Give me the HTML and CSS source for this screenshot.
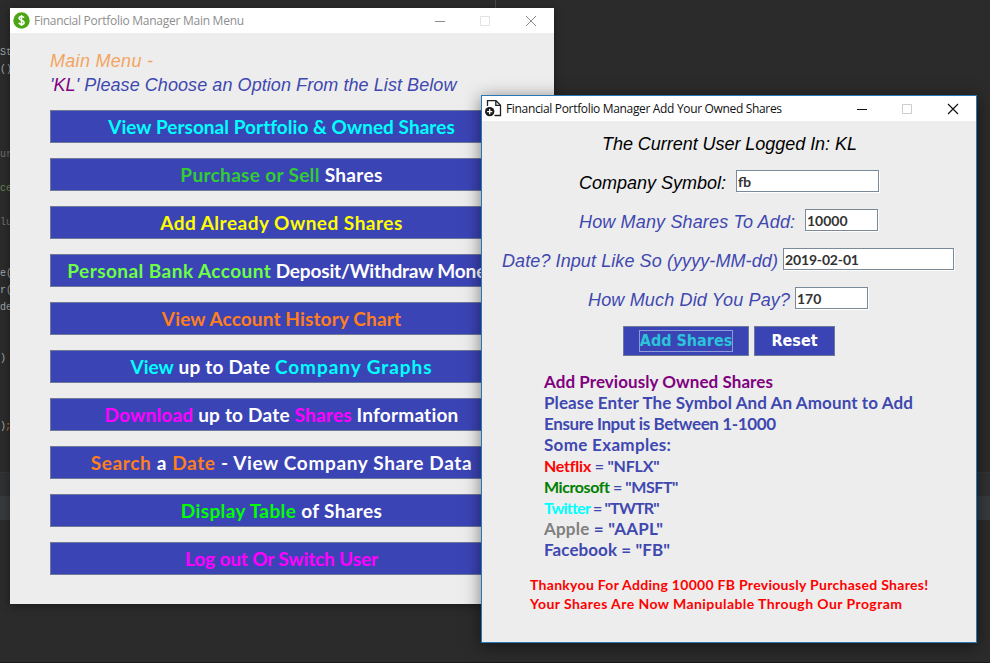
FILE: index.html
```html
<!DOCTYPE html>
<html lang="en">
<head>
<meta charset="utf-8">
<title>Financial Portfolio Manager</title>
<link rel="stylesheet" href="styles.css">
</head>
<body>
<div class="desktop">
<div class="editor">
<pre class="code">St
()




<span class="dim">ur</span>

<span class="string">ce</span>

<span class="dim">lu</span>


e(
r(
de


<span class="cut">)</span>



<span class="cut">)<span class="semi">;</span></span></pre>
<div class="band"></div>
<div class="band band-current"></div>
</div>
<div class="guide"></div>

<section class="window main-window">
  <header class="titlebar">
    <svg class="app-icon" width="17" height="17" viewBox="0 0 17 17"><circle cx="8.5" cy="8.5" r="8.2" fill="#4ba614"/><path d="M11 5.8C10.6 4.8 9.700 4.500 8.500 4.500C7 4.500 6.100 5.200 6.100 6.300C6.100 8.900 11.100 7.700 11.100 10.500C11.100 11.800 10 12.400 8.600 12.400C7.200 12.400 6.100 11.900 5.800 10.800M8.500 3V14" fill="none" stroke="#fff" stroke-width="1.500"/></svg>
    <h1 class="title">Financial Portfolio Manager Main Menu</h1>
    <svg class="controls" width="104" height="14" viewBox="0 0 104 14" fill="none" stroke="#8c8c8c"><path d="M0 7.500H10"/><path d="M45.500 2.500H54.500V11.500H45.500Z" stroke="#e3e3e3"/><path d="M91 2L101 12M101 2L91 12"/></svg>
  </header>
  <div class="menu-body">
    <p class="heading"><span class="sandy">Main Menu -</span><br><span class="second">'<span class="purple">KL</span>' Please Choose an Option From the List Below</span></p>
    <nav class="menu">
      <button><span class="cyan">View Personal Portfolio &amp; Owned Shares</span></button>
      <button><span class="lime-dark">Purchase or Sell</span> Shares</button>
      <button><span class="yellow">Add Already Owned Shares</span></button>
      <button><span class="lime wide">Personal Bank Account</span> Deposit/Withdraw Money</button>
      <button><span class="orange">View Account History Chart</span></button>
      <button><span class="cyan tight">View</span> up to Date <span class="cyan wide">Company Graphs</span></button>
      <button><span class="magenta">Download</span> up to Date <span class="magenta">Shares</span> Information</button>
      <button><span class="orange">Search</span> a <span class="orange">Date</span> - View Company Share Data</button>
      <button><span class="green">Display Table</span> of Shares</button>
      <button><span class="magenta">Log out Or Switch User</span></button>
    </nav>
  </div>
</section>

<section class="window add-window">
  <header class="titlebar">
    <svg class="app-icon" width="17" height="17" viewBox="0 0 17 17"><path d="M2.500 6V.700H11L15.500 5.200V15.500H9.500M10.800 .700V5.300H15.500" fill="none" stroke="#222" stroke-width="1.300"/><circle cx="4.700" cy="11.600" r="4.700" fill="#1b1b1b"/><path d="M4.700 9V14.200M2.100 11.600H7.300" stroke="#fff" stroke-width="1.300"/></svg>
    <h2 class="title">Financial Portfolio Manager Add Your Owned Shares</h2>
    <svg class="controls" width="104" height="14" viewBox="0 0 104 14" fill="none" stroke="#111"><path d="M0 7.500H10"/><path d="M45.500 2.500H54.500V11.500H45.500Z" stroke="#ccc"/><path d="M91 2L101 12M101 2L91 12" stroke-width="1.200"/></svg>
  </header>
  <form class="form">
    <div class="row user">The Current User Logged In: KL</div>
    <div class="row symbol"><label for="symbol">Company Symbol:</label><input id="symbol" value="fb"></div>
    <div class="row amount"><label for="amount">How Many Shares To Add:</label><input id="amount" value="10000"></div>
    <div class="row date"><label for="date">Date? Input Like So (yyyy-MM-dd)</label><input id="date" value="2019-02-01"></div>
    <div class="row paid"><label for="paid">How Much Did You Pay?</label><input id="paid" value="170"></div>
    <div class="actions"><button type="button" class="add"><span>Add Shares</span></button><button type="button" class="reset">Reset</button></div>
  </form>
  <div class="info">
    <p class="purple">Add Previously Owned Shares</p>
    <p>Please Enter The Symbol And An Amount to Add</p>
    <p>Ensure Input is Between 1-1000</p>
    <p>Some Examples:</p>
    <p><span class="red">Netflix</span> = "NFLX"</p>
    <p><span class="forest">Microsoft</span> = "MSFT"</p>
    <p><span class="cyan">Twitter</span> = "TWTR"</p>
    <p><span class="gray">Apple</span> = "AAPL"</p>
    <p>Facebook = "FB"</p>
  </div>
  <div class="message">
    <p>Thankyou For Adding 10000 FB Previously Purchased Shares!</p>
    <p>Your Shares Are Now Manipulable Through Our Program</p>
  </div>
</section>
</div>
</body>
</html>
```
FILE: styles.css
```css
* { box-sizing: border-box; }
body, p, h1, h2, pre { margin: 0; }

.desktop {
  position: relative;
  width: 990px;
  height: 663px;
  overflow: hidden;
  background: #2b2b2b;
  border-bottom: 1px solid #1c1718;
}

.editor { padding-top: 44px; }
.code {
  height: 428px;
  font: 10px/17px "Liberation Mono", monospace;
  color: #a0a7ab;
}
.dim { color: #727272; }
.string { color: #6a8759; }
.semi { color: #cc7832; }
.cut { letter-spacing: -1px; }
.band { height: 24px; background: #303132; border-top: 1px solid #353637; }
.band-current { background: #383b3d; border: 0; }
.guide {
  position: absolute;
  left: 495px;
  top: 0;
  width: 1px;
  height: 8px;
  background: #484848;
}

.window { position: absolute; background: #ededed; }
.main-window {
  left: 10px;
  top: 8px;
  width: 544px;
  height: 596px;
  box-shadow: 0 2px 9px rgba(0, 0, 0, .4);
}
.add-window {
  left: 481px;
  top: 95px;
  width: 496px;
  height: 548px;
  border: 1px solid #2878b8;
  box-shadow: 0 3px 16px rgba(0, 0, 0, .5);
}

.titlebar {
  display: flex;
  align-items: center;
  height: 25px;
  padding-left: 3px;
  background: #fff;
}
.title {
  flex: 1;
  margin-left: 4px;
  font: 12px/24px "Open Sans", sans-serif;
  letter-spacing: -.26px;
  color: #8e8e8e;
  white-space: nowrap;
}
.add-window .title { color: #111; letter-spacing: -.335px; }
.controls { margin-right: 15px; flex: none; }

.menu-body { padding: 16px 41px 0 40px; }
.heading {
  font: italic 18px/24px "Liberation Sans", sans-serif;
  color: #3f48b0;
  white-space: nowrap;
}
.heading .sandy { letter-spacing: .3px; }
.second { letter-spacing: .07px; }
.menu { display: grid; gap: 15px; margin-top: 13px; }
button {
  padding: 0;
  border: 1px solid #6c7a98;
  border-radius: 0;
  background: #3b44b5;
  color: #fff;
}
.menu button {
  height: 33px;
  padding-top: 1px;
  font: bold 19px/24px Lato, sans-serif;
  white-space: nowrap;
}
.menu button:nth-child(1) { letter-spacing: .04px; }
.menu button:nth-child(2) { letter-spacing: .33px; }
.menu button:nth-child(3) { letter-spacing: .49px; }
.menu button:nth-child(4) { letter-spacing: -.17px; }
.menu button:nth-child(5) { letter-spacing: .14px; }
.menu button:nth-child(6) { letter-spacing: .2px; }
.menu button:nth-child(7) { letter-spacing: .21px; }
.menu button:nth-child(8) { letter-spacing: .64px; }
.menu button:nth-child(9) { letter-spacing: .37px; }
.menu button:nth-child(10) { letter-spacing: -.13px; }
.menu button:nth-child(4) .wide { letter-spacing: .45px; }
.menu button:nth-child(6) .wide { letter-spacing: .95px; }
.menu button:nth-child(6) .tight { letter-spacing: 0; }

.sandy { color: #f4a460; }
.purple { color: #800080; }
.cyan { color: #0ff; }
.lime-dark { color: #32cd32; }
.yellow { color: #ff0; }
.lime { color: #6cff45; }
.orange { color: #ff7f1c; }
.magenta { color: #f0f; }
.green { color: #0f0; }
.red { color: #f00; }
.forest { color: #008000; }
.gray { color: #808080; }

.form {
  padding-top: 10px;
  font: italic 18px/22px "Liberation Sans", sans-serif;
  color: #3f48b0;
}
.row {
  display: flex;
  height: 22px;
  margin-bottom: 17px;
  white-space: nowrap;
}
.row label { padding-top: 2px; }
.user { padding: 2px 0 0 120px; color: #000; letter-spacing: -.04px; }
.symbol { padding-left: 97px; color: #000; }
.amount { padding-left: 97px; letter-spacing: .15px; }
.date { padding-left: 20px; letter-spacing: .09px; }
.paid { padding-left: 106px; letter-spacing: .16px; }
.symbol label { width: 157px; }
.amount label { width: 226px; }
.date label { width: 281px; }
.paid label { width: 207px; }
input {
  width: 73px;
  height: 22px;
  padding: 1px 0 0 1px;
  border: 1px solid #7a8a99;
  border-radius: 0;
  background: #fff;
  box-shadow: 1px 1px #fff;
  font: bold 14px/18px Lato, sans-serif;
  color: #333;
}
.symbol input { width: 143px; }
.date input { width: 171px; letter-spacing: -.16px; }
.actions { display: flex; gap: 5px; padding-left: 141px; }
.actions button { height: 30px; font: bold 16px/20px "DejaVu Sans Condensed", "DejaVu Sans", sans-serif; }
.actions .add { width: 126px; color: #2bc4d8; }
.add span { display: inline-block; height: 22px; border: 1px solid #8d9bd8; white-space: nowrap; }
.actions .reset { width: 81px; }

.info {
  padding: 15px 0 0 62px;
  font: bold 17px/21px Lato, sans-serif;
  color: #3f48b0;
  white-space: nowrap;
}
.info p { height: 21px; }
.info p:nth-child(1) { letter-spacing: .06px; }
.info p:nth-child(2) { letter-spacing: .1px; }
.info p:nth-child(3) { letter-spacing: -.38px; }
.info p:nth-child(4) { letter-spacing: .32px; }
.info p:nth-child(5) { font-size: 16px; letter-spacing: -.22px; }
.info p:nth-child(6) { font-size: 16px; letter-spacing: -.43px; }
.info p:nth-child(7) { font-size: 16px; letter-spacing: -.77px; }
.info p:nth-child(8) { letter-spacing: .21px; }
.info p:nth-child(9) { letter-spacing: .08px; }
.message {
  padding: 15px 0 0 48px;
  font: bold 14px/19px Lato, sans-serif;
  letter-spacing: .29px;
  color: #f00;
  white-space: nowrap;
}
.message p + p { letter-spacing: .43px; }
```
